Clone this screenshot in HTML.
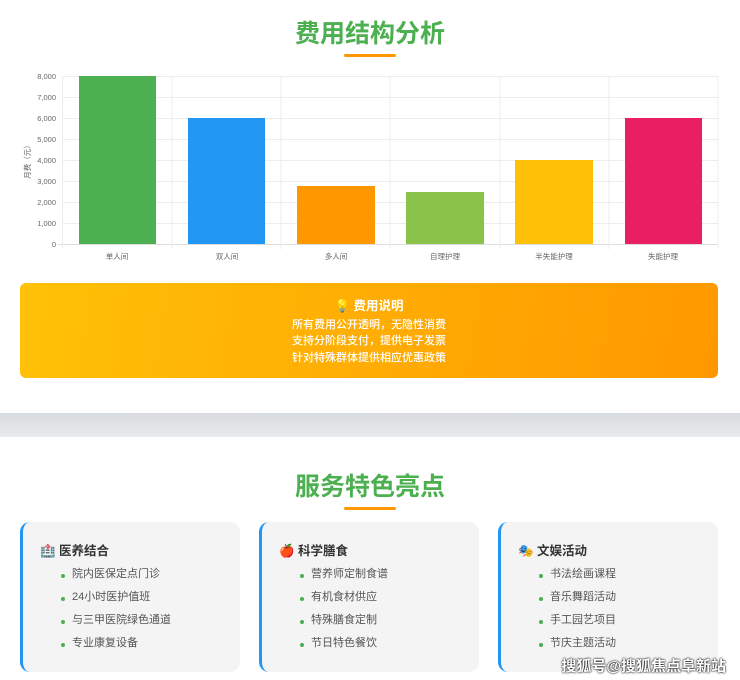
<!DOCTYPE html>
<html><head><meta charset="utf-8"><style>
*{margin:0;padding:0;box-sizing:border-box}
body{width:740px;height:680px;overflow:hidden;background:#fff;font-family:"Liberation Sans","Noto Sans CJK SC",sans-serif;position:relative}
.h{position:absolute;left:0;width:740px;text-align:center;color:#4caf50;font-size:25px;font-weight:bold}
.ul{position:absolute;left:344px;width:52px;height:3px;background:#ff9800;border-radius:2px}
.band{position:absolute;left:0;top:413px;width:740px;height:24px;background:linear-gradient(#d9dcdf,#e8eaec)}
.box{position:absolute;left:20px;top:283px;width:698px;height:95px;border-radius:6px;background:linear-gradient(100deg,#ffc107,#ff9800);color:#fff;text-align:center;font-size:11px;line-height:16.5px;padding-top:15px;font-weight:500}
.box b{font-size:12.5px;display:block;margin-bottom:2px}
.card{position:absolute;top:522px;width:220px;height:150px;background:#f4f4f4;border-radius:10px;border-left:3px solid #2196f3}
.card h3{position:absolute;left:17px;top:18px;font-size:12.5px;color:#333}
.card ul{position:absolute;left:49px;top:43px;list-style:none;font-size:11px;color:#555}
.card li{height:23px;position:relative}
.card li:before{content:"";position:absolute;left:-11px;top:9px;width:4px;height:4px;border-radius:50%;background:#4caf50}
.wm{position:absolute;right:14px;top:655px;font-size:15px;font-weight:bold;color:#fff;text-shadow:0 0 2px #000,0 0 1px #000}
</style></head><body>
<div class="h" style="top:14px">费用结构分析</div>
<div class="ul" style="top:54px"></div>
<svg style="position:absolute;left:0;top:0" width="740" height="270" font-family="Liberation Sans,Noto Sans CJK SC,sans-serif" font-size="7.5" fill="#666">
<g stroke="#ececec" stroke-width="1">
<line x1="62" x2="718" y1="76.5" y2="76.5"/><line x1="62" x2="718" y1="97.5" y2="97.5"/><line x1="62" x2="718" y1="118.5" y2="118.5"/><line x1="62" x2="718" y1="139.5" y2="139.5"/><line x1="62" x2="718" y1="160.5" y2="160.5"/><line x1="62" x2="718" y1="181.5" y2="181.5"/><line x1="62" x2="718" y1="202.5" y2="202.5"/><line x1="62" x2="718" y1="223.5" y2="223.5"/><line x1="58" x2="718" y1="244.5" y2="244.5" stroke="#ddd"/>
<line x1="62.5" x2="62.5" y1="76" y2="249"/><line x1="172" x2="172" y1="76" y2="249"/><line x1="281" x2="281" y1="76" y2="249"/><line x1="390" x2="390" y1="76" y2="249"/><line x1="500" x2="500" y1="76" y2="249"/><line x1="609" x2="609" y1="76" y2="249"/><line x1="718" x2="718" y1="76" y2="249"/>
</g>
<g text-anchor="end"><text x="56" y="79">8,000</text><text x="56" y="100">7,000</text><text x="56" y="121">6,000</text><text x="56" y="142">5,000</text><text x="56" y="163">4,000</text><text x="56" y="184">3,000</text><text x="56" y="205">2,000</text><text x="56" y="226">1,000</text><text x="56" y="247">0</text></g>
<text transform="translate(30,160) rotate(-90)" text-anchor="middle">月费（元）</text>
<rect x="79" y="76" width="77" height="168" fill="#4caf50"/>
<rect x="188" y="118" width="77" height="126" fill="#2196f3"/>
<rect x="297" y="186" width="78" height="58" fill="#ff9800"/>
<rect x="406" y="192" width="78" height="52" fill="#8bc34a"/>
<rect x="515" y="160" width="78" height="84" fill="#ffc107"/>
<rect x="625" y="118" width="77" height="126" fill="#e91e63"/>
<g text-anchor="middle"><text x="117" y="259">单人间</text><text x="227" y="259">双人间</text><text x="336" y="259">多人间</text><text x="445" y="259">自理护理</text><text x="554" y="259">半失能护理</text><text x="663" y="259">失能护理</text></g>
</svg>
<div class="box"><b>💡 费用说明</b>所有费用公开透明，无隐性消费<br>支持分阶段支付，提供电子发票<br>针对特殊群体提供相应优惠政策</div>
<div class="band"></div>
<div class="h" style="top:467px">服务特色亮点</div>
<div class="ul" style="top:507px"></div>
<div class="card" style="left:20px"><h3>🏥 医养结合</h3><ul><li>院内医保定点门诊</li><li>24小时医护值班</li><li>与三甲医院绿色通道</li><li>专业康复设备</li></ul></div>
<div class="card" style="left:259px"><h3>🍎 科学膳食</h3><ul><li>营养师定制食谱</li><li>有机食材供应</li><li>特殊膳食定制</li><li>节日特色餐饮</li></ul></div>
<div class="card" style="left:498px"><h3>🎭 文娱活动</h3><ul><li>书法绘画课程</li><li>音乐舞蹈活动</li><li>手工园艺项目</li><li>节庆主题活动</li></ul></div>
<div class="wm">搜狐号@搜狐焦点阜新站</div>
</body></html>
